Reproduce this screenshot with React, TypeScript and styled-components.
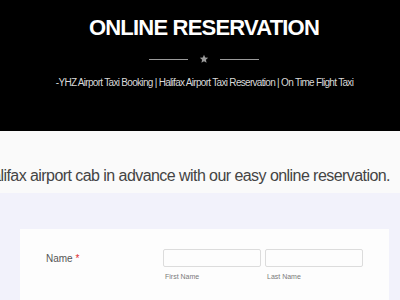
import React from 'react';
import styled, { createGlobalStyle } from 'styled-components';

const GlobalStyle = createGlobalStyle`
    html, body {
        margin: 0;
        padding: 0;
        background: #f2f2fb;
        font-family: "Liberation Sans", Arial, sans-serif;
        overflow: hidden;
    }
`;

const Page = styled.div`
    width: 400px;
    height: 300px;
    overflow: hidden;
`;

const Hero = styled.header`
    background: #000;
    height: 131px;
    display: flex;
    flex-direction: column;
    align-items: center;
    padding-top: 13px;
    box-sizing: border-box;
`;

const Title = styled.h1`
    margin: 0 0 0 8px;
    color: #fff;
    font-size: 22px;
    font-weight: 700;
    letter-spacing: -0.8px;
    line-height: 30px;
`;

const Divider = styled.div`
    display: flex;
    align-items: center;
    gap: 11px;
    margin-top: 11px;
    margin-left: 8px;
`;

const Rule = styled.span`
    display: block;
    width: 39px;
    height: 1px;
    background: #9a9a9a;
`;

const Subtitle = styled.p`
    margin: 13px 0 0 9px;
    color: #d8d8d8;
    font-size: 10px;
    letter-spacing: -0.7px;
    white-space: nowrap;
`;

const Intro = styled.section`
    background: #fafafa;
    height: 62px;
    display: flex;
    justify-content: flex-end;
    align-items: flex-end;
    padding: 0 10px 8px 0;
    box-sizing: border-box;
    overflow: hidden;
`;

const IntroText = styled.p`
    margin: 0;
    white-space: nowrap;
    color: #444;
    font-size: 16px;
    letter-spacing: -0.56px;
    flex-shrink: 0;
`;

const FormArea = styled.section`
    padding: 36px 11px 0 20px;
`;

const Card = styled.div`
    background: #fdfdfd;
    height: 80px;
    display: grid;
    grid-template-columns: 113px 98px 98px;
    column-gap: 4px;
    padding: 20px 0 0 26px;
    box-sizing: border-box;
`;

const FieldLabel = styled.div`
    color: #555;
    font-size: 10px;
    padding-top: 4px;
`;

const Required = styled.span`
    color: #e02b2b;
`;

const Field = styled.div`
    display: flex;
    flex-direction: column;
    gap: 6px;
`;

const Input = styled.input`
    height: 18px;
    box-sizing: border-box;
    border: 1px solid #dcdcdc;
    border-radius: 2px;
    background: #fdfdfd;
    margin: 0;
    padding: 0 4px;
`;

const SubLabel = styled.span`
    color: #7a7a7a;
    font-size: 7px;
    padding-left: 2px;
`;

function Star() {
    return (
        <svg width="10" height="10" viewBox="0 0 24 24">
            <path d="M12 2l2.9 6.6 7.1.6-5.4 4.7 1.6 7.1L12 17.3 5.8 21l1.6-7.1L2 9.2l7.1-.6z" fill="#9a9a9a" />
        </svg>
    );
}

export default function App() {
    return (
        <Page>
            <GlobalStyle />
            <Hero>
                <Title>ONLINE RESERVATION</Title>
                <Divider>
                    <Rule />
                    <Star />
                    <Rule />
                </Divider>
                <Subtitle>-YHZ Airport Taxi Booking | Halifax Airport Taxi Reservation | On Time Flight Taxi</Subtitle>
            </Hero>
            <Intro>
                <IntroText>Book your Halifax airport cab in advance with our easy online reservation.</IntroText>
            </Intro>
            <FormArea>
                <Card>
                    <FieldLabel>
                        Name <Required>*</Required>
                    </FieldLabel>
                    <Field>
                        <Input type="text" />
                        <SubLabel>First Name</SubLabel>
                    </Field>
                    <Field>
                        <Input type="text" />
                        <SubLabel>Last Name</SubLabel>
                    </Field>
                </Card>
            </FormArea>
        </Page>
    );
}
